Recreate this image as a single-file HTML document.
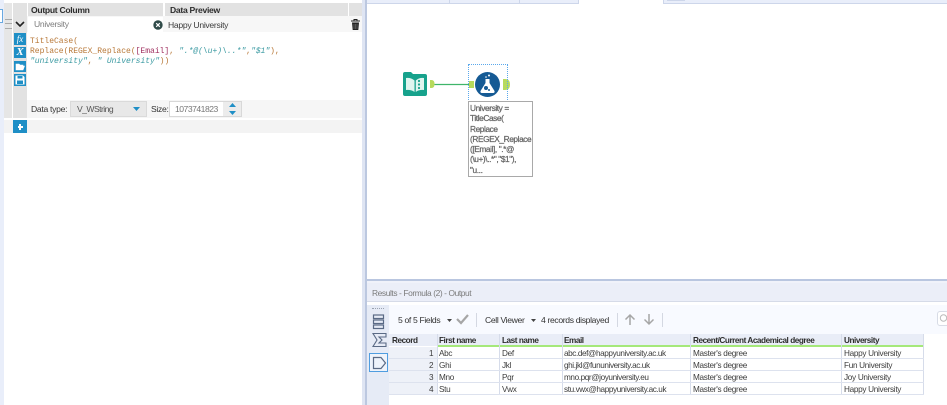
<!DOCTYPE html>
<html><head><meta charset="utf-8"><style>
html,body{margin:0;padding:0;background:#fff}
#r{position:relative;width:947px;height:405px;overflow:hidden;background:#fff;font-family:"Liberation Sans",sans-serif;font-size:8.2px;letter-spacing:-.3px;color:#3c3c3c;filter:blur(.3px)}
#r div{position:absolute;box-sizing:border-box;white-space:nowrap}
.h{font-weight:bold;color:#2d2d2d;letter-spacing:-.45px}
.hl{font-size:8.6px;font-weight:bold;color:#2d2d2d;letter-spacing:-.3px}
.t{line-height:12px;height:12px}
.l{font-size:8.6px;letter-spacing:-.3px}
.tb{font-size:8.6px;letter-spacing:-.35px;color:#333}
.e{letter-spacing:-.4px}
.m{font-family:"Liberation Mono",monospace;font-size:8px;letter-spacing:0;line-height:10px;height:10px;white-space:pre}
.o{color:#b87838}.c{color:#a03060}.s{color:#3b9aa2;font-style:italic}
.b{background:#1f8fc6}
</style></head><body><div id="r">
<!-- left strip -->
<div style="left:0;top:0;width:4px;height:405px;background:#e9eefa"></div>
<div style="left:0;top:9px;width:3px;height:14px;background:#fff;border:1px solid #6aa9e0;border-left:0"></div>
<!-- header -->
<div style="left:4px;top:3px;width:8px;height:115px;background:#e6e6e6"></div>
<div style="left:13px;top:3px;width:14px;height:115px;background:#e2e2e2"></div>
<div style="left:28px;top:3px;width:135px;height:13px;background:#e2e2e2"></div>
<div style="left:165px;top:3px;width:183px;height:13px;background:#e2e2e2"></div>
<div style="left:349px;top:3px;width:13px;height:13px;background:#e2e2e2"></div>
<div class="t hl" style="left:31px;top:4px">Output Column</div>
<div class="t hl" style="left:170px;top:4px">Data Preview</div>
<!-- row -->
<div style="left:27px;top:16px;width:335px;height:16px;background:#f7f7f7"></div>
<div style="left:28px;top:17px;width:135px;height:15px;background:#fff"></div>
<div style="left:5px;top:19px;width:7px;height:10px;border-top:1px solid #aaa;border-bottom:1px solid #aaa"><div style="left:0;top:3px;width:7px;height:1px;background:#aaa"></div></div>
<svg style="position:absolute;left:15px;top:21px" width="10" height="6"><path d="M1 1L5 5L9 1" fill="none" stroke="#222" stroke-width="1.600"/></svg>
<div class="t l" style="left:34px;top:18px;color:#7d7d7d">University</div>
<svg style="position:absolute;left:153px;top:20px" width="10" height="10"><circle cx="5" cy="5" r="4.700" fill="#2f4a48"/><path d="M3.200 3.200L6.800 6.800M6.800 3.200L3.200 6.800" stroke="#fff" stroke-width="1.200"/></svg>
<div class="t l" style="left:168px;top:19px">Happy University</div>
<svg style="position:absolute;left:350px;top:18px" width="11" height="13"><path d="M1 3H10M4 3V1.500H7V3" fill="none" stroke="#222" stroke-width="1"/><path d="M2 4.500L2.700 12H8.300L9 4.500Z" fill="#222"/><path d="M4 6V11M5.500 6V11M7 6V11" stroke="#888" stroke-width=".5"/></svg>
<!-- formula -->
<div style="left:27px;top:32px;width:335px;height:68px;background:#fff"></div>
<div class="m o" style="left:30px;top:37px">TitleCase(</div>
<div class="m" style="left:30px;top:47px"><span class="o">Replace(REGEX_Replace(</span><span class="c">[Email]</span><span class="o">,</span> <span class="s">".*@(\u+)\..*"</span><span class="o">,</span><span class="s">"$1"</span><span class="o">),</span></div>
<div class="m" style="left:30px;top:57px"><span class="s">"university"</span><span class="o">,</span> <span class="s">" University"</span><span class="o">))</span></div>
<!-- side buttons -->
<div class="b" style="left:14px;top:33px;width:12px;height:12px;color:#fff;letter-spacing:0;font:italic 9px/12px 'Liberation Serif',serif;text-align:center">fx</div>
<div class="b" style="left:14px;top:47px;width:12px;height:11px;color:#fff;letter-spacing:0;font:italic bold 11px/11px 'Liberation Serif',serif;text-align:center">X</div>
<div class="b" style="left:14px;top:61px;width:12px;height:11px"></div>
<svg style="position:absolute;left:15px;top:62px" width="10" height="9"><path d="M1 8V2H4L5 3H8V4H3L1 8H8L9.500 4H3" fill="#fff" stroke="#fff" stroke-width=".6"/></svg>
<div class="b" style="left:14px;top:74px;width:12px;height:12px"></div>
<svg style="position:absolute;left:15px;top:75px" width="10" height="10"><path d="M.5.500H8L9.500 2V9.500H.5Z" fill="#fff"/><rect x="2.500" y="1" width="5" height="2.500" fill="#1f8fc6"/><rect x="2" y="5.500" width="6" height="3.500" fill="#1f8fc6"/></svg>
<!-- data type row -->
<div style="left:27px;top:100px;width:335px;height:18px;background:#f6f6f6"></div>
<div class="t l" style="left:31px;top:103px;color:#333">Data type:</div>
<div style="left:70px;top:101px;width:77px;height:16px;background:#e8e8e8;border:1px solid #dadada"></div>
<div class="t l" style="left:77px;top:103px;color:#555;letter-spacing:-.55px">V_WString</div>
<svg style="position:absolute;left:133px;top:107px" width="7" height="4"><path d="M0 0H7L3.500 4Z" fill="#1f8fc6"/></svg>
<div class="t l" style="left:151px;top:103px;color:#333">Size:</div>
<div style="left:169px;top:101px;width:73px;height:16px;background:#ececec;border:1px solid #d8d8d8"></div>
<div style="left:170px;top:102px;width:53px;height:14px;background:#fff"></div>
<div class="t l" style="left:175px;top:103px;color:#777;letter-spacing:-.5px">1073741823</div>
<svg style="position:absolute;left:229px;top:103px" width="7" height="12"><path d="M0 4L3.500 0L7 4ZM0 8H7L3.500 12Z" fill="#1f8fc6"/></svg>
<!-- add row -->
<div style="left:4px;top:120px;width:358px;height:13px;background:#f3f3f3"></div>
<div class="b" style="left:13px;top:120px;width:14px;height:13px"></div>
<div style="left:17.500px;top:126px;width:5px;height:1.500px;background:#fff"></div>
<div style="left:19.200px;top:124px;width:1.500px;height:5.500px;background:#fff"></div>
<!-- divider -->
<div style="left:362px;top:0;width:4px;height:405px;background:#dfe5f3"></div>
<div style="left:365px;top:0;width:2px;height:405px;background:#bcc8e0"></div>
<!-- canvas tabs -->
<div style="left:367px;top:0;width:212px;height:4px;background:#e9eefa;border-bottom:1px solid #cdd6ea;border-right:1px solid #cdd6ea"></div>
<div style="left:449px;top:0;width:1px;height:4px;background:#cdd6ea"></div>
<div style="left:519px;top:0;width:1px;height:4px;background:#cdd6ea"></div>
<div style="left:663px;top:0;width:284px;height:4px;background:#e9eefa;border-bottom:1px solid #cdd6ea;border-left:1px solid #cdd6ea"></div>
<div style="left:667px;top:0;width:18px;height:1px;background:#cdd6ea"></div>
<!-- input tool -->
<svg style="position:absolute;left:403px;top:72px" width="25" height="25">
<path d="M0 2Q0 0 2 0H8L10 2H22Q24 2 24 4V22Q24 24 22 24H2Q0 24 0 22Z" fill="#17a28c"/>
<path d="M3 6Q8 5.500 11.500 8.500V20Q8 17.500 3 18ZM12.800 8.500Q16 5.500 21 6V18Q16 17.500 12.800 20Z" fill="#dff5ef"/>
<circle cx="16" cy="9" r="1.100" fill="#17a28c"/><circle cx="16" cy="12.500" r="1.100" fill="#17a28c"/><circle cx="16" cy="16" r="1.100" fill="#17a28c"/>
</svg>
<!-- connector -->
<svg style="position:absolute;left:425px;top:76px" width="90" height="18">
<path d="M5 4H6.500Q9.500 4 9.500 8Q9.500 12 6.500 12H5Z" fill="#b7da5c"/>
<path d="M9.500 8.500H45" stroke="#3fb56a" stroke-width="1.300"/>
<rect x="44" y="5" width="5" height="7" fill="#b7da5c"/>
<path d="M78 3H80Q85 3 85 8.500Q85 14 80 14H78Z" fill="#b7da5c"/>
</svg>
<!-- formula tool -->
<div style="left:468px;top:64px;width:40px;height:38px;border:1px dotted #5aa8ec;border-bottom:0"></div>
<svg style="position:absolute;left:475px;top:72px" width="25" height="25">
<circle cx="12.500" cy="12.500" r="12.500" fill="#155a94"/>
<path d="M10.500 7H14.500V11L19.500 19Q20 21 18 21H7Q5 21 5.500 19L10.500 11Z" fill="#fff"/>
<circle cx="14" cy="3.500" r="1" fill="#fff"/><circle cx="11" cy="5" r=".8" fill="#fff"/>
<circle cx="11" cy="16" r="2" fill="#155a94"/><circle cx="14" cy="18" r="1" fill="#155a94"/>
</svg>
<!-- annotation -->
<div style="left:468px;top:101px;width:65px;height:76px;background:#fff;border:1px solid #a9a9a9"></div>
<div style="left:470px;top:103px;font-size:8.300px;line-height:10.300px;color:#666;-webkit-text-stroke:.25px #666;letter-spacing:-.4px">University =<br>TitleCase(<br>Replace<br>(REGEX_Replace<br>([Email], ".*@<br>(\u+)\..*","$1"),<br>"u...</div>
<!-- results -->
<div style="left:367px;top:279px;width:580px;height:2px;background:#b9c6e0"></div>
<div style="left:367px;top:281px;width:580px;height:2px;background:#f0f2fa"></div>
<div style="left:367px;top:283px;width:580px;height:19px;background:#ebeef8;border-bottom:1px solid #d6dbe8"></div>
<div class="t" style="left:372px;top:287px;color:#7b7b7b;font-size:8.400px;letter-spacing:-.4px">Results - Formula (2) - Output</div>
<div style="left:367px;top:303px;width:580px;height:102px;background:#fff"></div>
<div style="left:367px;top:305px;width:22px;height:100px;background:#e6ebf6"></div>
<div style="left:389px;top:305px;width:558px;height:29px;background:#f8faff"></div>
<div style="left:372px;top:308px;width:12px;height:1px;border-top:1px dotted #9aa2b0"></div>
<div style="left:369px;top:353px;width:19px;height:19px;border:1px solid #4f9de0;background:#eef3fb"></div>
<svg style="position:absolute;left:370px;top:313px" width="20" height="62" fill="none" stroke="#5a6a85" stroke-width="1.200">
<rect x="3.500" y="2" width="10" height="3.500"/><rect x="3.500" y="7" width="10" height="3.500"/><rect x="3.500" y="12" width="10" height="3.500"/>
<path d="M3 20.500H16V24H9L12 27L9 30H16V33.500H3L7 27Z" stroke-width="1.100"/>
<path d="M3.500 44.500H11L15.500 50L11 55.500H3.500Z"/>
</svg>
<!-- toolbar -->
<div class="t tb" style="left:398px;top:314px">5 of 5 Fields</div>
<svg style="position:absolute;left:447px;top:319px" width="5" height="3"><path d="M0 0H5L2.500 3Z" fill="#444"/></svg>
<svg style="position:absolute;left:456px;top:313px" width="13" height="12"><path d="M1 6L5 10L12 2" fill="none" stroke="#a6a6a6" stroke-width="2.200"/></svg>
<div style="left:476px;top:313px;width:1px;height:14px;background:#d4d8e2"></div>
<div class="t tb" style="left:485px;top:314px">Cell Viewer</div>
<svg style="position:absolute;left:531px;top:319px" width="5" height="3"><path d="M0 0H5L2.500 3Z" fill="#444"/></svg>
<div class="t tb" style="left:541px;top:314px">4 records displayed</div>
<div style="left:617px;top:313px;width:1px;height:14px;background:#d4d8e2"></div>
<svg style="position:absolute;left:624px;top:313px" width="32" height="13" fill="none" stroke="#a6a6a6" stroke-width="1.500"><path d="M6 12V2M1.500 6.500L6 2L10.500 6.500M25 1V11M20.500 6.500L25 11L29.500 6.500"/></svg>
<div style="left:662px;top:313px;width:1px;height:14px;background:#d4d8e2"></div>
<div style="left:937px;top:311px;width:12px;height:15px;border:1px solid #d8dce6;border-radius:3px;background:#fff"></div>
<svg style="position:absolute;left:939px;top:314px" width="8" height="9"><circle cx="4.500" cy="4" r="3.200" fill="none" stroke="#bbb"/></svg>
<!-- table -->
<div style="left:389px;top:334px;width:535px;height:12px;background:#e9edf7"></div>
<div style="left:389px;top:347px;width:48px;height:47px;background:#eef1f8"></div>
<div style="left:437px;top:345px;width:487px;height:2px;background:#a5e87a"></div>
<div style="left:437px;top:334px;width:1px;height:60px;background:#d6dcea"></div>
<div style="left:499px;top:334px;width:1px;height:60px;background:#d6dcea"></div>
<div style="left:562px;top:334px;width:1px;height:60px;background:#d6dcea"></div>
<div style="left:690px;top:334px;width:1px;height:60px;background:#d6dcea"></div>
<div style="left:841px;top:334px;width:1px;height:60px;background:#d6dcea"></div>
<div style="left:923px;top:334px;width:1px;height:60px;background:#d6dcea"></div>
<div style="left:389px;top:358px;width:535px;height:1px;background:#dde2ee"></div>
<div style="left:389px;top:370px;width:535px;height:1px;background:#dde2ee"></div>
<div style="left:389px;top:382px;width:535px;height:1px;background:#dde2ee"></div>
<div style="left:389px;top:394px;width:535px;height:1px;background:#dde2ee"></div>
<div class="t h" style="left:392px;top:335px">Record</div>
<div class="t h" style="left:439px;top:335px">First name</div>
<div class="t h" style="left:502px;top:335px">Last name</div>
<div class="t h" style="left:564px;top:335px">Email</div>
<div class="t h" style="left:693px;top:335px">Recent/Current Academical degree</div>
<div class="t h" style="left:844px;top:335px">University</div>

<div class="t" style="left:429px;top:348px">1</div><div class="t" style="left:439px;top:348px">Abc</div><div class="t" style="left:502px;top:348px">Def</div><div class="t e" style="left:564px;top:348px">abc.def@happyuniversity.ac.uk</div><div class="t" style="left:693px;top:348px">Master's degree</div><div class="t" style="left:844px;top:348px">Happy University</div>
<div class="t" style="left:429px;top:360px">2</div><div class="t" style="left:439px;top:360px">Ghi</div><div class="t" style="left:502px;top:360px">Jkl</div><div class="t e" style="left:564px;top:360px">ghi.jkl@fununiversity.ac.uk</div><div class="t" style="left:693px;top:360px">Master's degree</div><div class="t" style="left:844px;top:360px">Fun University</div>
<div class="t" style="left:429px;top:372px">3</div><div class="t" style="left:439px;top:372px">Mno</div><div class="t" style="left:502px;top:372px">Pqr</div><div class="t e" style="left:564px;top:372px">mno.pqr@joyuniversity.eu</div><div class="t" style="left:693px;top:372px">Master's degree</div><div class="t" style="left:844px;top:372px">Joy University</div>
<div class="t" style="left:429px;top:384px">4</div><div class="t" style="left:439px;top:384px">Stu</div><div class="t" style="left:502px;top:384px">Vwx</div><div class="t e" style="left:564px;top:384px">stu.vwx@happyuniversity.ac.uk</div><div class="t" style="left:693px;top:384px">Master's degree</div><div class="t" style="left:844px;top:384px">Happy University</div>
</div></body></html>
